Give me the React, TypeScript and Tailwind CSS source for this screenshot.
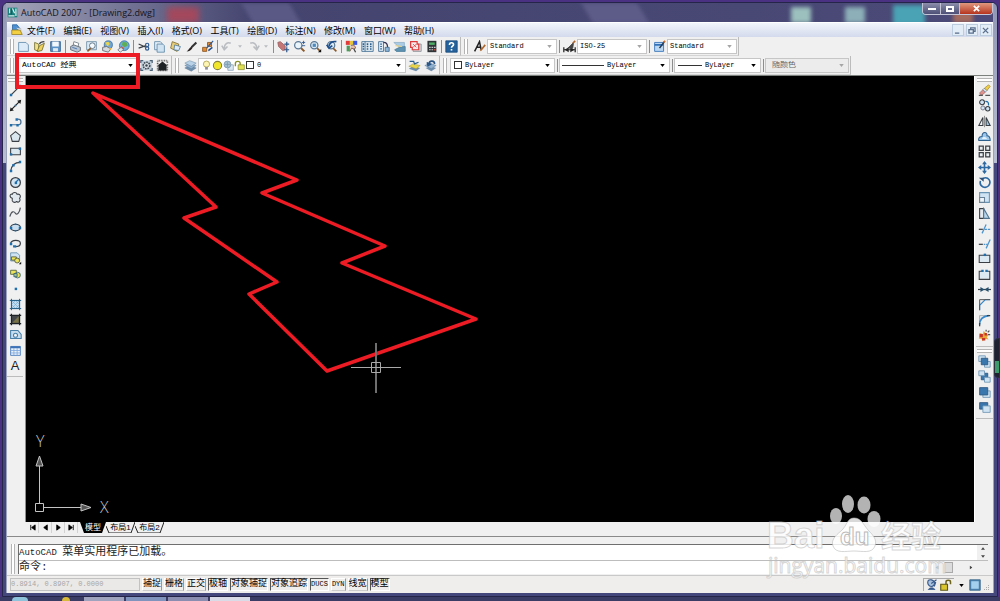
import { useState, type ReactNode } from 'react';
import clsx from 'clsx';

const BLUE = '#1f6fae';
const DARK = '#3a3f45';
const PALE = '#cfe3f3';

// All glyphs are drawn on a 16x16 grid.
const glyphs: Record<string, ReactNode> = {
  new: <path d="M2 3h9l3 3v8H2z" fill="#dcebf7" stroke="#5b87a8" />,
  open: (
    <>
      <path d="M2 3l5 2v9L2 12z" fill="#f3e08a" stroke="#6b6a2e" />
      <path d="M5 14l3-7 6-3-3 9z" fill="#f0d15c" stroke="#6b6a2e" />
      <path d="M8 5c1-3 4-3 6-3" fill="none" stroke={DARK} strokeWidth="1.5" />
    </>
  ),
  save: (
    <>
      <path d="M2 2h12v12H2z" fill="#5b93c9" stroke="#2d5c8f" />
      <path d="M4 2h8v6H4z" fill="#f2f7fb" />
      <path d="M5 10h6v4H5z" fill="#dfe9f1" />
    </>
  ),
  plot: (
    <>
      <path d="M5 7l1-5 6 2-1 5z" fill="#fff" stroke="#6b7680" />
      <path d="M2 8l4-2 8 3v4l-4 2-8-3z" fill="#b9c4d2" stroke="#56616d" />
      <path d="M4 9l6 2" stroke="#3d6fae" />
    </>
  ),
  preview: (
    <>
      <path d="M2 2h12v10H2z" fill="#dbe9f4" stroke="#6a8aa3" />
      <circle cx="9" cy="7" r="3.5" fill="#f4fafd" stroke="#4c6478" />
      <path d="M7 10l-4 4" stroke="#8a5a2b" strokeWidth="2" />
    </>
  ),
  publish: (
    <>
      <circle cx="9" cy="6" r="5" fill="#6ea7d8" stroke="#3e6b96" />
      <path d="M5 3l4-1 2 3-3 3z" fill="#e8d34a" />
      <path d="M2 9l5-1 5 3-3 4-7-2z" fill="#d8dbe0" stroke="#5c5f66" />
      <path d="M9 9l4 1-1 3" fill="#e9b53d" />
    </>
  ),
  globe: (
    <>
      <circle cx="9" cy="7" r="6" fill="#6fb0e0" stroke="#356f9e" />
      <path d="M7 2l5 1 1 4-4 2-3-3z" fill="#5fae55" />
      <path d="M5 7l4 3-2 3-3-2z" fill="#d8553f" />
      <path d="M1 12l4-3 3 3-4 3z" fill="#dfe4ea" stroke="#6c7680" />
    </>
  ),
  cut: (
    <>
      <path d="M2 5l9 4M2 10l9-3" stroke={DARK} strokeWidth="1.5" />
      <circle cx="12.500" cy="6" r="2" fill="none" stroke="#335e93" strokeWidth="1.500" />
      <circle cx="12.500" cy="10.500" r="2" fill="none" stroke="#335e93" strokeWidth="1.500" />
    </>
  ),
  copy: (
    <>
      <path d="M2 2h7l2 2v8H2z" fill="#e3eef7" stroke="#5d86a6" />
      <path d="M5 5h7l2 2v8H5z" fill="#cfe3f3" stroke="#5d86a6" />
    </>
  ),
  paste: (
    <>
      <path d="M4 2l8 3-2 9-8-4z" fill="#e7cd78" stroke="#7a6a33" />
      <path d="M7 6l7 2-2 5-6-1z" fill="#dcebf7" stroke="#4f7898" />
    </>
  ),
  brush: (
    <>
      <path d="M14 3L8 9" stroke="#333" strokeWidth="2.500" />
      <path d="M8 8l1 2c-2 3-4 4-7 4 2-1 3-4 6-6z" fill="#2a2220" />
    </>
  ),
  match: (
    <>
      <path d="M8 3h5v5H8z" fill="#e58b32" stroke="#86501b" />
      <path d="M2 9h5v5H2z" fill="#e58b32" stroke="#86501b" />
      <path d="M15 1L7 10" stroke="#2c5b9a" strokeWidth="1.500" />
      <path d="M9 13l5-4" stroke="#28508a" strokeWidth="2" />
    </>
  ),
  undo: <path d="M12 4c-4-2-8 1-8 6M1 7l3 5 4-4" fill="none" stroke="#b9bcc0" strokeWidth="2" />,
  redo: <path d="M4 4c4-2 8 1 8 6M15 7l-3 5-4-4" fill="none" stroke="#b9bcc0" strokeWidth="2" />,
  pan: (
    <>
      <path d="M1 3l3-1 6 5v5l-3 1-5-5z" fill="#c47575" stroke="#9a5c5c" />
      <path d="M12 2v6M9 5h6M9 12h6M12 9v6" stroke="#2d588c" strokeWidth="1.500" />
    </>
  ),
  zoomRt: (
    <>
      <circle cx="6.500" cy="6.500" r="4.500" fill="#e8f3fa" stroke="#5a7894" strokeWidth="1.500" />
      <path d="M10 10l4 4" stroke="#8a5a2b" strokeWidth="2.500" />
      <path d="M13 1v4M11 3h4M11 7h4" stroke="#234e86" />
    </>
  ),
  zoomWin: (
    <>
      <circle cx="6.500" cy="6.500" r="4.500" fill="#dcebf5" stroke="#5a7894" strokeWidth="1.500" />
      <path d="M4.500 4.500h4v4h-4z" fill="#4d8abf" />
      <path d="M10 10l4 4" stroke="#8a5a2b" strokeWidth="2" />
      <path d="M15 11v4h-4z" fill="#111" />
    </>
  ),
  zoomPrev: (
    <>
      <circle cx="7.500" cy="6.500" r="4.500" fill="#dcebf5" stroke="#5a7894" strokeWidth="1.500" />
      <path d="M10 10l4 4" stroke="#8a5a2b" strokeWidth="2" />
      <path d="M14 2c-5-1-9 2-9 6M2 6l3 4 4-3" fill="none" stroke="#1d4f8c" strokeWidth="2" />
    </>
  ),
  props: (
    <>
      <path d="M1 1h5v5H1z" fill="#e23b3b" />
      <path d="M6 1h4v5H6z" fill="#e2c63b" />
      <path d="M10 1h5v5h-5z" fill="#3b57e2" />
      <path d="M2 7h4v7H2z" fill="#4d9b5a" />
      <path d="M7 7c4-2 6 1 6 3l-2 1-3-1-2 4" fill="#e5bfa8" stroke="#6b4b45" />
      <path d="M11 11l2 4" stroke="#444" strokeWidth="1.500" />
    </>
  ),
  center: (
    <>
      <path d="M1 2h14v12H1z" fill="#e5eff6" stroke="#3a668c" />
      <path d="M5 2v12" stroke="#3a668c" />
      <path d="M2 5h2M2 8h2M2 11h2M7 5h2M11 5h2M7 8h2M11 8h2M7 11h2M11 11h2" stroke="#2c5f8d" strokeWidth="2" />
    </>
  ),
  palettes: (
    <>
      <path d="M2 2h6v12H2z" fill="#dce9f4" stroke="#3a668c" />
      <path d="M4 5h2M4 8h2M4 11h2" stroke="#2c5f8d" strokeWidth="1.500" />
      <path d="M8 3c4 0 5 3 5 6" fill="none" stroke="#335" strokeWidth="1.500" />
      <path d="M10 9h5v5h-5z" fill="#8fb7d9" stroke="#3a668c" />
    </>
  ),
  sheets: (
    <>
      <path d="M1 3h13v7L8 9z" fill="#a9cbe5" stroke="#8fb0c8" />
      <path d="M2 12l6-3 7-1v6H4z" fill="#5f93b3" stroke="#4b7d99" />
      <path d="M3 7l8 1" stroke="#e6d387" strokeWidth="1.500" />
    </>
  ),
  markup: (
    <>
      <path d="M5 5h10v9H5z" fill="#d5d9dd" stroke="#8a8f94" />
      <path d="M2 2h8v3h2v7H4V9H2z" fill="#fbe9e9" stroke="#dd3b3b" strokeWidth="1.500" />
      <path d="M5 5l4 4M9 5L5 9" stroke="#dd3b3b" />
    </>
  ),
  calc: (
    <>
      <path d="M3 1h11v14H3z" fill="#2f3436" />
      <path d="M5 3h7v3H5z" fill="#4fae66" />
      <path d="M5 9h2M8 9h2M11 9h2M5 12h2M8 12h2" stroke="#c7cbd0" strokeWidth="1.500" />
      <path d="M11 12h2" stroke="#dd4a3b" strokeWidth="1.500" />
    </>
  ),
  help: (
    <>
      <path d="M1 1h14v14H1z" fill="#25629c" stroke="#174a7c" />
      <path d="M5.500 6c0-4 5-3 5-.5 0 2-2.500 2-2.500 4" fill="none" stroke="#fff" strokeWidth="2" />
      <path d="M7 11h2v2H7z" fill="#fff" />
    </>
  ),
  textStyle: (
    <>
      <path d="M2 14L8 2l2 10M4 9h5" fill="none" stroke="#222" strokeWidth="1.800" />
      <path d="M15 6l-4 5-2 2" fill="none" stroke="#b0672b" strokeWidth="2" />
    </>
  ),
  dimStyle: (
    <>
      <path d="M1 12h14M1 9v6M15 9v6" stroke="#222" strokeWidth="1.500" />
      <path d="M2 12l5-3v6zM14 12L9 9v6z" fill="#222" />
      <path d="M13 3L6 10l6 0z" fill="#444" stroke="#444" />
      <path d="M15 1l-3 3" stroke="#b0672b" strokeWidth="2" />
    </>
  ),
  tableStyle: (
    <>
      <path d="M2 3h11v11H2z" fill="#bcd7f1" stroke="#2a6bb5" />
      <path d="M2 6h11" stroke="#2a6bb5" strokeWidth="2" />
      <path d="M14 2l-6 8" stroke="#263a52" strokeWidth="2" />
      <path d="M15 1l-2 2" stroke="#d0732f" strokeWidth="2" />
    </>
  ),
  gear: (
    <>
      <path d="M1 2h14v12H1z" fill="#c3d2de" />
      <path d="M1 5V2h3M12 2h3v3M15 11v3h-3M4 14H1v-3" fill="none" stroke="#4b6175" strokeWidth="1.500" />
      <circle cx="8" cy="8" r="4" fill="#dfe5ea" stroke="#3c4650" strokeWidth="2" strokeDasharray="2 1" />
      <circle cx="8" cy="8" r="1.500" fill="#3c4650" />
    </>
  ),
  home: (
    <>
      <path d="M2 2h12v12H2z" fill="none" stroke="#555" strokeDasharray="1 1" strokeWidth="2" />
      <path d="M2 8l6-5 6 5h-1v6H3V8z" fill="#1f2224" />
    </>
  ),
  layers: (
    <>
      <path d="M1 11l6-3 8 3-6 4z" fill="#6f8fae" stroke="#50708e" strokeWidth=".5" />
      <path d="M1 8l6-3 8 3-6 4z" fill="#8fb0cf" stroke="#50708e" strokeWidth=".5" />
      <path d="M1 5l6-3 8 3-6 4z" fill="#b9d2e8" stroke="#50708e" strokeWidth=".5" />
    </>
  ),
  bulb: (
    <>
      <circle cx="8" cy="6" r="4.500" fill="#fdf5b4" stroke="#9a8d3c" />
      <path d="M6 10h4v4H6z" fill="#8d9096" />
    </>
  ),
  sun: <circle cx="8" cy="8" r="6" fill="#f1e62b" stroke="#85813a" strokeWidth="1.500" />,
  freeze: (
    <>
      <path d="M7 7h8v8H7z" fill="#dbe7f0" stroke="#7d98ad" />
      <circle cx="6.500" cy="6.500" r="5" fill="#a5bfd0" stroke="#6e8ea4" />
      <path d="M6.500 3v7M3 6.500h7" stroke="#7997ab" />
    </>
  ),
  lock: (
    <>
      <path d="M2 9V5c0-4 7-4 7 0v3" fill="none" stroke="#87902a" strokeWidth="2" />
      <path d="M6 7h9v7H6z" fill="#dfe052" stroke="#83862a" />
    </>
  ),
  layerPrev: (
    <>
      <path d="M1 12l5-3 9 2-5 4z" fill="#6f8fae" />
      <path d="M1 9l5-3 9 2-5 4z" fill="#e8d449" stroke="#8f8430" strokeWidth=".5" />
      <path d="M2 3h5l1 3 5-2" fill="none" stroke="#2c5f8d" strokeWidth="1.500" />
    </>
  ),
  layerBack: (
    <>
      <path d="M2 11l6-2 7 2-6 4z" fill="#6f8fae" />
      <path d="M1 8l6-3 8 3-6 4z" fill="#8fb0cf" stroke="#50708e" strokeWidth=".5" />
      <path d="M13 6c0-4-6-5-7 0M4 4l1 4 4-2" fill="none" stroke="#2a5584" strokeWidth="2" />
    </>
  ),
  line: (
    <>
      <path d="M2 14L14 2" stroke={DARK} strokeWidth="1.500" />
      <path d="M1 12h3v3H1zM12 1h3v3h-3z" fill={BLUE} />
    </>
  ),
  xline: (
    <>
      <path d="M2 14L14 2" stroke="#222" strokeWidth="1.500" />
      <path d="M1 15l1-5 4 4zM15 1l-5 1 4 4z" fill="#222" />
      <path d="M7 7h2v2H7z" fill={BLUE} />
    </>
  ),
  pline: (
    <>
      <path d="M2 12h9c5 0 5-7 0-7" fill="none" stroke="#4c6f90" strokeWidth="1.500" />
      <path d="M1 11h3v3H1zM9 11h3v3H9zM8 4h3v3H8z" fill={BLUE} />
    </>
  ),
  polygon: <path d="M8 2l6 5-2 7H4L2 7z" fill="#dbe7ef" stroke={DARK} strokeWidth="1.300" />,
  rect: (
    <>
      <path d="M2 4h12v8H2z" fill="#dbe7ef" stroke={DARK} strokeWidth="1.300" />
      <path d="M1 10h3v3H1zM12 3h3v3h-3z" fill={BLUE} />
    </>
  ),
  arc: (
    <>
      <path d="M2 14C3 7 7 3 14 3" fill="none" stroke={DARK} strokeWidth="1.500" />
      <path d="M1 12h3v3H1zM12 1h3v3h-3zM4 5h3v3H4z" fill={BLUE} />
    </>
  ),
  circle: (
    <>
      <circle cx="8" cy="8" r="6" fill="#d4e5f1" stroke={DARK} strokeWidth="1.500" />
      <path d="M8 8l4-4" stroke={BLUE} strokeWidth="1.500" />
      <path d="M7 7h3v3H7z" fill={BLUE} />
    </>
  ),
  revcloud: (
    <path
      d="M4 9C0 8 1 3 4 4c1-3 5-3 6 0 4-1 5 3 3 5 2 3-1 6-4 4-2 2-6 1-5-4z"
      fill="#e1e9ef"
      stroke={DARK}
      strokeWidth="1.300"
    />
  ),
  spline: <path d="M1 13c2-7 5-7 7-4s5-1 6-7" fill="none" stroke="#50565d" strokeWidth="1.500" />,
  ellipse: (
    <>
      <ellipse cx="8" cy="8" rx="6" ry="4" fill="#c9dfef" stroke={DARK} strokeWidth="1.500" />
      <path d="M1 7h3v3H1zM12 7h3v3h-3zM7 3h2v2H7zM7 11h2v2H7z" fill={BLUE} />
    </>
  ),
  ellipseArc: (
    <>
      <path d="M2 8c1-5 12-5 12 0 0 3-3 4-7 4" fill="none" stroke={DARK} strokeWidth="1.500" />
      <path d="M1 7h3v3H1zM5 10h4v3H5z" fill={BLUE} />
    </>
  ),
  insert: (
    <>
      <path d="M2 1h8l3 3v7H2z" fill={PALE} stroke="#5f89aa" />
      <path d="M3 6h6v4H3z" fill="#ece35c" stroke="#4b5233" />
      <circle cx="10" cy="10.500" r="3" fill="#ece35c" stroke="#4b5233" />
      <path d="M15 12v3h-3z" fill="#111" />
    </>
  ),
  block: (
    <>
      <path d="M2 4h7v5H2z" fill="#ece35c" stroke="#4b5d33" />
      <circle cx="10.500" cy="10" r="3.500" fill="#ece35c" stroke="#2f5f7a" />
      <path d="M6 8h4v4H6z" fill="#9cc08a" stroke="#2f5f7a" />
    </>
  ),
  point: <path d="M7 7h3v3H7z" fill={BLUE} />,
  hatch: (
    <>
      <path d="M3 3h10v10H3z" fill="#c2dcef" stroke="#2f78a8" />
      <path d="M3 8l5-5M3 13L13 3M8 13l5-5M3 8l5 5M3 3l10 10M8 3l5 5" stroke="#77acd0" strokeWidth=".8" />
      <path d="M3 1v14M13 1v14M1 3h14M1 13h14" stroke="#275f85" strokeWidth="1.200" />
    </>
  ),
  gradient: (
    <>
      <path d="M3 3h10v10H3z" fill="#44484a" />
      <path d="M4 12L12 4v8z" fill="#7a7447" />
      <path d="M3 1v14M13 1v14M1 3h14M1 13h14" stroke="#202326" strokeWidth="1.500" />
    </>
  ),
  region: (
    <>
      <path d="M2 3h9l4 5v5H2z" fill="#c5ddef" stroke="#477fa8" strokeWidth="1.300" />
      <circle cx="8" cy="9" r="2.500" fill="#f2f6f9" stroke="#477fa8" strokeWidth="1.300" />
    </>
  ),
  table: (
    <>
      <path d="M2 3h12v11H2z" fill="#eaf2fb" stroke="#3e73b7" />
      <path d="M2 4h12" stroke="#3e73b7" strokeWidth="2.500" />
      <path d="M2 8h12M2 11h12M6 5v9M10 5v9" stroke="#7ea8dc" />
    </>
  ),
  erase: (
    <>
      <path d="M2 11l4-4 3 3-3 3H3z" fill="#e0908b" stroke="#7d5350" strokeWidth=".7" />
      <path d="M6 7l2-2 3 3-2 2z" fill="#dfe8f2" stroke="#44658c" strokeWidth=".7" />
      <path d="M8 5l5-4 2 2-4 5z" fill="#f0cf46" stroke="#85702a" strokeWidth=".7" />
      <path d="M1 14h5M9 14h6" stroke="#555" strokeWidth="1.300" />
    </>
  ),
  copyObj: (
    <>
      <circle cx="5" cy="4" r="3" fill={PALE} stroke={DARK} strokeWidth="1.300" />
      <circle cx="6" cy="11" r="2.500" fill={PALE} stroke="#667" strokeWidth="1" />
      <circle cx="12" cy="12" r="2.700" fill={PALE} stroke={DARK} strokeWidth="1.300" />
      <path d="M9 3c4 0 4 2 4 5" fill="none" stroke={BLUE} strokeWidth="1.500" />
    </>
  ),
  mirror: (
    <>
      <path d="M6 3v10H1z" fill="#f3f5f6" stroke={DARK} strokeWidth="1.300" />
      <path d="M10 3v10h5z" fill="#9ec4e2" stroke={DARK} strokeWidth="1.300" />
      <path d="M8 1v14" stroke="#777" />
    </>
  ),
  offset: (
    <>
      <path d="M1 13c-1-5 3-5 4-5 0-7 7-6 6-1 4 0 4 3 4 6z" fill="#9cc6ea" stroke="#2d5f8c" strokeWidth="1.300" />
      <path d="M5 11c0-3 5-3 6 0z" fill="#e6f1fa" />
    </>
  ),
  array: (
    <path
      d="M1.500 1.500h5v5h-5zM9.500 1.500h5v5h-5zM1.500 9.500h5v5h-5zM9.500 9.500h5v5h-5z"
      fill="#e7edf1"
      stroke={DARK}
      strokeWidth="1.500"
    />
  ),
  move: (
    <>
      <path d="M8 2v12M2 8h12" stroke="#2d69a3" strokeWidth="2" />
      <path d="M8 0l3 4H5zM8 16l3-4H5zM0 8l4-3v6zM16 8l-4-3v6z" fill="#2d69a3" />
    </>
  ),
  rotate: (
    <>
      <path d="M6 3c7-3 11 4 7 9-4 4-12 1-10-6" fill="none" stroke="#2d69a3" strokeWidth="2" />
      <path d="M1 2h6v5z" fill="#2d4f78" />
    </>
  ),
  scale: (
    <>
      <path d="M2 2h12v12H2z" fill={PALE} stroke="#6a92b2" strokeWidth="1.300" />
      <path d="M2 8h6v6H2z" fill="#eef4f8" stroke="#6a8298" strokeWidth="1.300" />
    </>
  ),
  stretch: (
    <>
      <path d="M2 2h5v12H2z" fill="#e5edf2" stroke={DARK} strokeWidth="1.300" />
      <path d="M7 2l7 12H7z" fill="#b9d6ec" stroke="#52748f" strokeWidth="1.300" />
    </>
  ),
  trim: (
    <>
      <path d="M1 9h5" stroke={DARK} strokeWidth="1.500" />
      <path d="M8 9h7" stroke="#4b93cf" strokeWidth="1.500" strokeDasharray="3 1" />
      <path d="M5 14l5-11" stroke="#4b93cf" strokeWidth="1.500" />
    </>
  ),
  extend: (
    <>
      <path d="M1 9h5" stroke={DARK} strokeWidth="1.500" />
      <path d="M7 9h5" stroke="#4b93cf" strokeWidth="1.500" strokeDasharray="2 1" />
      <path d="M10 14l5-11" stroke="#4b93cf" strokeWidth="1.500" />
    </>
  ),
  breakPt: (
    <>
      <path d="M1.500 4h13v9h-13z" fill="#dce9f2" stroke={DARK} strokeWidth="1.300" />
      <path d="M7 2h3v3H7z" fill={BLUE} />
    </>
  ),
  breakTwo: (
    <>
      <path d="M1.500 4h13v9h-13z" fill="#dce9f2" />
      <path d="M5 4H1.500v10h13V4H11" fill="none" stroke={DARK} strokeWidth="1.300" />
      <path d="M4 2h3v3H4zM9 2h3v3H9z" fill={BLUE} />
    </>
  ),
  join: (
    <>
      <path d="M0 8h16" stroke={DARK} strokeWidth="1.500" />
      <path d="M3 5l5 3-5 3zM13 5L8 8l5 3z" fill="#23516f" />
    </>
  ),
  chamfer: (
    <>
      <path d="M2 15V9l7-7h6" fill="none" stroke="#3988ca" strokeWidth="1.500" />
      <path d="M2 15V2h13" fill="none" stroke="#555" strokeWidth="1.200" />
    </>
  ),
  fillet: (
    <>
      <path d="M2 15V2h13" fill="none" stroke="#888" strokeWidth=".8" />
      <path d="M2 13C2 6 6 3 13 2" fill="none" stroke="#3988ca" strokeWidth="2" />
      <path d="M2 15v-4M11 2h4" stroke={DARK} strokeWidth="1.500" />
    </>
  ),
  explode: (
    <>
      <path d="M2 5l4 1 1-4 3 4 3 1-2 3 2 3-5-1-2 3-2-3-3 0z" fill="#e8a835" />
      <path d="M2 6h4v4H2zM5 11h4v3H5zM8 5h3v3H8z" fill="#c73529" />
      <path d="M12 4l2-2M12 7h3M10 3V1" stroke="#555" strokeWidth="1.500" />
    </>
  ),
  orderFront: (
    <>
      <path d="M1 1h8v7H1z" fill={PALE} stroke="#6a92b2" />
      <path d="M8 8h7v7H8z" fill={PALE} stroke="#6a92b2" />
      <path d="M4 4h8v8H4z" fill="#3a77ad" stroke="#27547f" />
    </>
  ),
  orderBack: (
    <>
      <path d="M4 4h8v8H4z" fill="#3a77ad" stroke="#27547f" />
      <path d="M1 1h7v6H1z" fill={PALE} stroke="#6a92b2" />
      <path d="M8 9h7v6H8z" fill={PALE} stroke="#6a92b2" />
    </>
  ),
  orderAbove: (
    <>
      <path d="M6 6h9v8H6z" fill={PALE} stroke="#6a92b2" />
      <path d="M2 2h10v9H2z" fill="#3a77ad" stroke="#27547f" />
    </>
  ),
  orderUnder: (
    <>
      <path d="M2 2h10v8H2z" fill="#3a77ad" stroke="#27547f" />
      <path d="M6 6h9v8H6z" fill={PALE} stroke="#6a92b2" />
    </>
  ),
  comm: (
    <>
      <path d="M3 2c2-2 7-1 8 2s-1 6-4 6-6-4-4-8z" fill="#a9c1dd" stroke="#36598c" strokeWidth="1.500" />
      <path d="M14 1L7 6M13 4l-2 6" stroke="#36598c" strokeWidth="1.500" />
      <path d="M3 14c2-3 7-3 9 0z" fill="#36598c" stroke="#36598c" />
    </>
  ),
  padlock: (
    <>
      <path d="M8 8V4c0-3 6-3 6 0v3" fill="none" stroke="#6d641d" strokeWidth="2" />
      <path d="M1 7h9v8H1z" fill="#d9c52e" stroke="#5f5719" strokeWidth="1.500" />
    </>
  ),
  clean: (
    <>
      <path d="M1 1h14v14H1z" fill="#4f86b2" stroke="#2f5d83" />
      <path d="M3 3h10v10H3z" fill="#a4d0ee" />
    </>
  ),
  drawing: (
    <>
      <path d="M2 1h6l3 4v6H2z" fill="#4a90d6" stroke="#27619d" />
      <path d="M7 5l6 1v4" fill="#fff" stroke="#888" strokeWidth=".7" />
      <path d="M1 8l11 0 3 6H1z" fill="#f3cf42" stroke="#94781b" />
    </>
  ),
  app: (
    <>
      <path d="M1 1h14v14H1z" fill="#1a7f7d" />
      <path d="M4 2v7M8 2l3 7M13 2v11M2 13h9" stroke="#d9f1ef" strokeWidth="1.800" />
      <path d="M6 3v8" stroke="#0b4f50" strokeWidth="1.500" />
    </>
  )
};

const standardTools = [
  ['new', 'open', 'save'],
  ['plot', 'preview', 'publish', 'globe'],
  ['cut', 'copy', 'paste', 'brush', 'match'],
  ['undo', 'redo'],
  ['pan', 'zoomRt', 'zoomWin', 'zoomPrev'],
  ['props', 'center', 'palettes', 'sheets', 'markup', 'calc'],
  ['help']
];

const drawTools = [
  'line', 'xline', 'pline', 'polygon', 'rect', 'arc', 'circle', 'revcloud', 'spline', 'ellipse',
  'ellipseArc', 'insert', 'block', 'point', 'hatch', 'gradient', 'region', 'table', 'mtext'
];

const modifyTools = [
  'erase', 'copyObj', 'mirror', 'offset', 'array', 'move', 'rotate', 'scale', 'stretch', 'trim',
  'extend', 'breakPt', 'breakTwo', 'join', 'chamfer', 'fillet', 'explode'
];

const orderTools = ['orderFront', 'orderBack', 'orderAbove', 'orderUnder'];

const menus = [
  '文件(F)', '编辑(E)', '视图(V)', '插入(I)', '格式(O)', '工具(T)',
  '绘图(D)', '标注(N)', '修改(M)', '窗口(W)', '帮助(H)'
];

const statusModes = ['捕捉', '栅格', '正交', '极轴', '对象捕捉', '对象追踪', 'DUCS', 'DYN', '线宽', '模型'];

function Glyph({ name, className = 'size-[13px]' }: { name: string; className?: string }) {
  return (
    <svg viewBox="0 0 16 16" className={clsx('shrink-0', className)} aria-hidden="true">
      {glyphs[name]}
    </svg>
  );
}

function ToolButton({ name }: { name: string }) {
  return (
    <button type="button" aria-label={name} className="flex h-[15px] w-4 shrink-0 items-center justify-center">
      {name === 'mtext' ? (
        <span className="font-['Liberation_Sans',sans-serif] text-[13px] leading-none text-[#222]">A</span>
      ) : (
        <Glyph name={name} />
      )}
    </button>
  );
}

function Caret({ className = 'h-[3px] w-[5px]' }: { className?: string }) {
  return (
    <svg viewBox="0 0 6 4" className={clsx('shrink-0', className)} aria-hidden="true">
      <path d="M0 0h6L3 4z" fill="currentColor" />
    </svg>
  );
}

function Grip() {
  return <span className="mr-px h-[15px] w-1 shrink-0 border-x border-[#b4b4b4] bg-white" />;
}

function Separator() {
  return (
    <span className="flex h-[13px] w-1 shrink-0 justify-center">
      <span className="w-px bg-[#8d8d8d]" />
    </span>
  );
}

function Toolbar({ label, children }: { label: string; children: ReactNode }) {
  return (
    <div
      role="toolbar"
      aria-label={label}
      className="flex h-full items-center border-r border-b border-r-[#bcbcbc] border-b-[#d4d4d4] pr-px pl-[3px]"
    >
      <Grip />
      {children}
    </div>
  );
}

function Combo({
  label,
  value,
  width,
  muted,
  disabled,
  before
}: {
  label: string;
  value: string;
  width: string;
  muted?: boolean;
  disabled?: boolean;
  before?: ReactNode;
}) {
  return (
    <div
      className={clsx(
        'relative flex h-[15px] shrink-0 items-center border border-[#c6c6c6] pl-0.5',
        width,
        disabled ? 'bg-[#ececec]' : 'bg-white'
      )}
    >
      {before}
      <select
        aria-label={label}
        disabled={disabled}
        className={clsx(
          "h-full min-w-0 flex-1 appearance-none font-['Liberation_Mono','Noto_Sans_CJK_SC',monospace] leading-none opacity-100 outline-none",
          /[\u4e00-\u9fff]/.test(value) ? 'text-[8px]' : 'text-[7px]',
          disabled ? 'text-[#666]' : 'text-black'
        )}
      >
        <option>{value}</option>
      </select>
      <span className={clsx('pointer-events-none absolute right-1', muted ? 'text-[#a5a5a5]' : 'text-black')}>
        <Caret />
      </span>
    </div>
  );
}

function TitleBar() {
  return (
    <header className="relative flex h-[19px] shrink-0 items-center overflow-hidden bg-linear-to-r from-[#a3a3b8] via-[#44446f] via-25% to-[#4b4a78]">
      <div className="absolute top-1 left-40 h-4 w-8 bg-[#a4485c] blur-[3px]" />
      <div className="absolute top-0 left-60 h-5 w-12 skew-x-[30deg] bg-[#5a5885] blur-[2px]" />
      <div className="absolute top-0 left-[580px] h-5 w-14 skew-x-[30deg] bg-[#5d5b88] blur-[2px]" />
      <div className="absolute top-1 right-[182px] h-4 w-5 bg-[#9cc0bd] blur-[2px]" />
      <div className="absolute top-1 right-[128px] h-4 w-5 bg-[#8db0b8] blur-[2px]" />
      <div className="absolute top-0.5 right-[68px] h-5 w-8 bg-[#49a3b4] blur-[2px]" />
      <div className="absolute top-2 right-[20px] h-3 w-5 bg-[#a36a5e] blur-[2px]" />
      <h1 className="relative flex items-center gap-[3px] font-['Open_Sans',sans-serif] text-[9px] leading-none text-[#15151d]">
        <Glyph name="app" className="size-[11px]" />
        AutoCAD 2007 - [Drawing2.dwg]
      </h1>
      <div className="relative ml-auto flex h-3 self-start overflow-hidden rounded-b border border-t-0 border-[#c4c6d8] text-white">
        <button type="button" aria-label="最小化" className="flex w-[18px] items-center justify-center border-r border-[#c4c6d8] bg-linear-to-b from-[#8d8fab] to-[#4e5077]">
          <span className="h-0.5 w-2 bg-white" />
        </button>
        <button type="button" aria-label="还原" className="flex w-[19px] items-center justify-center border-r border-[#c4c6d8] bg-linear-to-b from-[#8d8fab] to-[#4e5077]">
          <span className="h-1.5 w-2 border-2 border-white" />
        </button>
        <button type="button" aria-label="关闭" className="flex w-8 items-center justify-center bg-linear-to-b from-[#e0977f] to-[#b5311b]">
          <svg viewBox="0 0 8 8" className="size-[7px]" aria-hidden="true">
            <path d="M1 1l6 6M7 1L1 7" stroke="#fff" strokeWidth="2" />
          </svg>
        </button>
      </div>
    </header>
  );
}

function MenuBar() {
  return (
    <nav className="flex h-[15px] shrink-0 items-center border-t border-white bg-linear-to-b from-[#f2f5fb] to-[#d3daec] font-['Open_Sans','Noto_Sans_CJK_SC',sans-serif] text-[9px] leading-none text-black">
      <span className="ml-1 flex w-3">
        <Glyph name="drawing" className="size-3" />
      </span>
      <div className="flex h-full w-[415px] justify-between">
        {menus.map((menu) => (
          <button key={menu} type="button" className="h-full px-1 whitespace-nowrap">
            {menu}
          </button>
        ))}
      </div>
      <div className="ml-auto flex gap-0.5 pr-px">
        {['M1 7h5', 'M3 3V1h5v4H6M1 3h5v4H1z', 'M1 1l6 6M7 1L1 7'].map((d) => (
          <button
            key={d}
            type="button"
            aria-label="窗口控制"
            className="flex size-3 items-center justify-center border border-[#bccde0] bg-[#e3edf8]"
          >
            <svg viewBox="0 0 9 8" className="h-[7px] w-2" aria-hidden="true">
              <path d={d} fill="none" stroke="#5a6f8c" strokeWidth="1.500" />
            </svg>
          </button>
        ))}
      </div>
    </nav>
  );
}

function StandardRow() {
  return (
    <div className="flex h-[19px] shrink-0 items-center">
      <Toolbar label="标准">
        {standardTools.map((group, index) => (
          <div key={group[0]} className="flex items-center">
            {index > 0 && <Separator />}
            {group.map((name) => (
              <span key={name} className="flex items-center">
                <ToolButton name={name} />
                {(name === 'undo' || name === 'redo') && (
                  <span className="flex w-[10px] justify-center text-[#b9bcc0]">
                    <Caret className="h-[3px] w-1" />
                  </span>
                )}
              </span>
            ))}
          </div>
        ))}
      </Toolbar>
      <Toolbar label="样式">
        <span className="w-0.5" />
        <ToolButton name="textStyle" />
        <Combo label="文字样式" value="Standard" width="w-[70px]" muted />
        <Separator />
        <ToolButton name="dimStyle" />
        <Combo label="标注样式" value="ISO-25" width="w-[70px]" muted />
        <Separator />
        <ToolButton name="tableStyle" />
        <Combo label="表格样式" value="Standard" width="w-[70px]" muted />
      </Toolbar>
    </div>
  );
}

function PropertiesRow() {
  return (
    <div className="flex h-[20px] shrink-0 items-center border-b border-[#7c817e]">
      <div className="relative flex h-full items-center">
        <Toolbar label="工作空间">
          <Combo label="工作空间" value="AutoCAD 经典" width="w-[123px]" before={<span className="w-1" />} />
          <ToolButton name="gear" />
          <ToolButton name="home" />
        </Toolbar>
        {/* highlight around the workspace switcher */}
        <div className="pointer-events-none absolute -top-[3px] left-2 z-10 h-9 w-[125px] border-4 border-[#ed1c24]" />
      </div>
      <Toolbar label="图层">
        <span className="w-0.5" />
        <ToolButton name="layers" />
        <Combo
          label="图层"
          value="0"
          width="w-[208px]"
          before={
            <span className="mr-[3px] flex items-center">
              {['bulb', 'sun', 'freeze', 'lock'].map((name) => (
                <Glyph key={name} name={name} className="size-[11px]" />
              ))}
              <span className="ml-px size-2 border border-[#333]" />
            </span>
          }
        />
        <ToolButton name="layerPrev" />
        <ToolButton name="layerBack" />
      </Toolbar>
      <Toolbar label="特性">
        <span className="w-0.5" />
        <Combo
          label="颜色"
          value="ByLayer"
          width="w-[105px]"
          before={<span className="mr-[3px] ml-px size-2 border border-[#333] bg-white" />}
        />
        <Separator />
        <Combo
          label="线型"
          value="ByLayer"
          width="w-[111px]"
          before={<span className="mr-[3px] h-px w-[42px] bg-[#333]" />}
        />
        <Separator />
        <Combo
          label="线宽"
          value="ByLayer"
          width="w-[87px]"
          before={<span className="mr-[3px] ml-px h-px w-6 bg-[#333]" />}
        />
        <Separator />
        <Combo label="打印样式" value="随颜色" width="w-[84px]" muted disabled before={<span className="w-1" />} />
      </Toolbar>
    </div>
  );
}

function SideGrip() {
  return <span className="mt-[2px] mb-px h-1 w-[15px] shrink-0 border-y border-[#b4b4b4] bg-white" />;
}

function SideTools({ label, tools, height }: { label: string; tools: string[]; height: string }) {
  return (
    <div role="toolbar" aria-label={label} className="flex flex-col items-center border-b border-[#bcbcbc] pb-[3px]">
      <SideGrip />
      <div className={clsx('flex flex-col justify-between', height)}>
        {tools.map((name) => (
          <ToolButton key={name} name={name} />
        ))}
      </div>
    </div>
  );
}

function DrawingArea() {
  return (
    <section aria-label="绘图区" className="relative min-w-0 flex-1 overflow-hidden bg-black">
      <svg className="absolute inset-0 size-full" aria-hidden="true">
        <path
          d="M67 17L271 104L236 117L359 170L316 187L450 243L301 295L223 218L251 206L158 142L190 131Z"
          fill="none"
          stroke="#ed1c24"
          strokeWidth="3.500"
          strokeLinejoin="round"
        />
        <path d="M350 267v50" stroke="#6f6f6f" strokeWidth="2" />
        <path d="M325 291.500h50M345.500 286.500h9v10h-9z" fill="none" stroke="#a9a9a9" />
      </svg>
      {/* UCS marker */}
      <svg viewBox="0 0 90 95" className="absolute bottom-0 left-0 h-[95px] w-[90px]" aria-hidden="true">
        <g fill="none" stroke="#c4c4c4">
          <path d="M9.500 76.500h8v8h-8zM13.500 76.500V39M17.500 80.500H56" />
          <path d="M13.500 29l3.500 10h-7zM65 80.500L55 77v7z" fill="#555" />
        </g>
        <g fill="#c4c4c4" className="font-['Open_Sans',sans-serif] text-[16px] font-light">
          <text x="10" y="20">Y</text>
          <text x="74" y="86">X</text>
        </g>
      </svg>
    </section>
  );
}

function LayoutTabs() {
  return (
    <div className="flex h-[15px] shrink-0 items-start border-b border-[#8a8a8a] pl-[19px] font-['Liberation_Sans','Noto_Sans_CJK_SC',sans-serif] text-[8px] leading-[11px] text-black">
      {['M2 1v6M7 1v6L3 4z', 'M6 1v6L2 4z', 'M2 1v6l4-3z', 'M6 1v6M1 1v6l4-3z'].map((d) => (
        <button
          key={d}
          type="button"
          aria-label="切换布局"
          className="flex h-[11px] w-[13px] items-center justify-center border-r border-[#d2d2d2]"
        >
          <svg viewBox="0 0 8 8" className="size-[7px]" aria-hidden="true">
            <path d={d} fill="#000" stroke="#000" />
          </svg>
        </button>
      ))}
      <button type="button" className="relative ml-0.5 h-[11px] w-[26px] text-white">
        <svg viewBox="0 0 26 11" className="absolute inset-0 size-full" aria-hidden="true">
          <path d="M0 0h26l-4 11H4z" fill="#000" />
        </svg>
        <span className="relative">模型</span>
      </button>
      {['布局1', '布局2'].map((tab) => (
        <button key={tab} type="button" className="relative h-[11px] w-[29px] text-center whitespace-nowrap">
          <svg viewBox="0 0 29 11" className="absolute inset-0 size-full" aria-hidden="true">
            <path d="M0 4l3 7h22l4-11" fill="none" stroke="#222" />
          </svg>
          <span className="relative">{tab}</span>
        </button>
      ))}
    </div>
  );
}

function CommandLine() {
  const [command, setCommand] = useState('');

  return (
    <section
      aria-label="命令行"
      className="flex h-[39px] shrink-0 items-stretch border-b border-[#c9c9c9] pt-[7px] pr-[5px] pb-px pl-1 font-['Liberation_Mono','Noto_Sans_CJK_SC',monospace] text-[11px] leading-none text-[#222]"
    >
      <span className="mr-[3px] w-1 border-x border-[#b4b4b4] bg-white" />
      <div className="min-w-0 flex-1 border-t border-l border-[#6f6f6f]">
        <div className="flex h-[15px] items-center bg-white">
          <p className="flex-1 whitespace-nowrap">
            <span className="text-[9px]">AutoCAD </span>菜单实用程序已加载。
          </p>
          <div className="flex h-full w-[11px] flex-col items-center justify-around bg-[#f0f0f0] text-[#444]">
            <Caret className="h-[3px] w-1 rotate-180" />
            <Caret className="h-[3px] w-1" />
          </div>
        </div>
        <div className="flex h-[14px] items-center border-t border-[#bdbdbd] bg-white">
          <label htmlFor="command">命令:</label>
          <input
            id="command"
            value={command}
            onChange={(event) => setCommand(event.target.value)}
            className="h-full min-w-0 flex-1 px-1 outline-none"
          />
          <div className="flex h-full w-[42px] items-center justify-between bg-[#f0f0f0] px-0.5 text-[#444]">
            <Caret className="h-[3px] w-1 rotate-90" />
            <span className="mr-3 h-[11px] w-[9px] border border-[#aaa] bg-[#dcdcdc]" />
            <Caret className="h-[3px] w-1 -rotate-90" />
          </div>
          <div className="h-full w-[13px] bg-[#f0f0f0]" />
        </div>
      </div>
    </section>
  );
}

function StatusBar() {
  const [pressed, setPressed] = useState<string[]>(['极轴', '对象捕捉', '对象追踪', 'DUCS', '模型']);

  const toggle = (mode: string) =>
    setPressed((current) => (current.includes(mode) ? current.filter((m) => m !== mode) : [...current, mode]));

  return (
    <footer className="flex h-[17px] shrink-0 items-center bg-[#f0eeec] pl-[3px] font-['Liberation_Mono','Noto_Sans_CJK_SC',monospace] text-[9px] leading-none text-black">
      <output className="mr-0.5 flex h-[13px] w-[130px] items-center border border-[#c2c2c2] bg-[#ebe9e7] text-[7px] text-[#a6a6a6]">
        0.8914, 0.8907, 0.0000
      </output>
      <div className="flex gap-0.5">
        {statusModes.map((mode) => {
          const active = pressed.includes(mode);
          return (
            <button
              key={mode}
              type="button"
              aria-pressed={active}
              onClick={() => toggle(mode)}
              className={clsx(
                'h-[13px] border whitespace-nowrap',
                /[A-Z]/.test(mode) && 'text-[7px]',
                active
                  ? 'border-t-[#555] border-r-white border-b-white border-l-[#555]'
                  : 'border-t-white border-r-[#999] border-b-[#ccc] border-l-white'
              )}
            >
              {mode}
            </button>
          );
        })}
      </div>
      <div className="ml-auto flex items-center pr-1">
        <div className="flex h-[13px] items-center gap-0.5 border-t border-l border-[#aaa] px-0.5">
          <Glyph name="comm" className="size-3" />
          <Glyph name="padlock" className="size-3" />
        </div>
        <span className="mx-[5px] pt-0.5">
          <Caret />
        </span>
        <button type="button" aria-label="全屏显示" className="mr-0.5">
          <Glyph name="clean" className="size-3" />
        </button>
        <svg viewBox="0 0 6 6" className="size-1.5 self-end" aria-hidden="true">
          <path d="M5 0h1v1H5zM3 2h1v1H3zM5 2h1v1H5zM1 4h1v1H1zM3 4h1v1H3zM5 4h1v1H5z" fill="#aaa" />
        </svg>
      </div>
    </footer>
  );
}

function Watermark() {
  return (
    <svg
      viewBox="0 0 182 90"
      className="pointer-events-none absolute right-[53px] bottom-[21px] h-[90px] w-[182px]"
      aria-hidden="true"
    >
      <g fill="#fff" fillOpacity=".7">
        <ellipse cx="71" cy="26" rx="6" ry="8" />
        <ellipse cx="83" cy="14" rx="6" ry="9" />
        <ellipse cx="99" cy="15" rx="6.500" ry="8.500" />
        <ellipse cx="109" cy="29" rx="6.500" ry="8" />
      </g>
      <g fill="#fff" fillOpacity=".85" stroke="#bbb" strokeOpacity=".6">
        <path d="M89 28c7 0 9 6 14 12 6 6 9 10 7 16-3 8-13 5-21 5s-18 3-21-5c-2-6 2-10 8-15s6-13 13-13z" />
        <text x="2" y="58" className="font-['Liberation_Sans',sans-serif] text-[37px] font-bold">Bai</text>
        <text x="116" y="57" className="font-['Noto_Sans_CJK_SC',sans-serif] text-[30px] font-bold">经验</text>
        <text x="3" y="83" className="font-['Open_Sans',sans-serif] text-[21px]">jingyan.baidu.com</text>
      </g>
      <text x="75" y="55" fill="#fff" stroke="#bbb" className="font-['Liberation_Sans',sans-serif] text-[24px] font-bold">
        du
      </text>
    </svg>
  );
}

export default function App() {
  return (
    <div className="relative flex h-screen flex-col overflow-hidden bg-[#4b3182] px-0.5 pt-0.5">
      <div className="flex min-h-0 flex-1 flex-col rounded-t-md border border-[#25254a] bg-linear-to-b from-[#8f97b4] from-0% via-[#b9bfd2] via-27% to-[#44477c] to-27% px-[3px] pb-[3px]">
        <div className="flex min-h-0 flex-1 flex-col border-x border-[#9da2bb] bg-[#f0f0f0]">
          <TitleBar />
          <MenuBar />
          <StandardRow />
          <PropertiesRow />
          <main className="flex min-h-0 flex-1">
            <aside className="w-[19px] shrink-0 border-r border-[#8f8f8f] pr-0.5">
              <SideTools label="绘图" tools={drawTools} height="h-[290px]" />
            </aside>
            <DrawingArea />
            <aside className="w-[19px] shrink-0 border-l border-white pl-px">
              <SideTools label="修改" tools={modifyTools} height="h-[260px]" />
              <SideTools label="绘图次序" tools={orderTools} height="h-[61px]" />
            </aside>
          </main>
          <LayoutTabs />
          <CommandLine />
          <StatusBar />
        </div>
      </div>
      <div className="-mx-0.5 flex h-1 shrink-0 items-stretch gap-0.5 bg-[#3b3c66] pl-3">
        <span className="w-4 rounded-t-full bg-[#8fc3dc]" />
        <span className="ml-8 w-2 rounded-t-full bg-[#d9b93a]" />
        <span className="ml-3 w-10 bg-[#9fa3bd]" />
        <span className="w-10 bg-[#7f93bd]" />
        <span className="w-10 bg-[#8a8db0]" />
        <span className="w-10 bg-[#d9dbe6]" />
      </div>
      <div className="absolute top-[338px] right-0 flex h-10 w-1.5 items-end rounded-l border border-[#2c3140] bg-[#1e2230] pb-1">
        <span className="h-3 w-full bg-[#3d9a6b]" />
      </div>
      <Watermark />
    </div>
  );
}
